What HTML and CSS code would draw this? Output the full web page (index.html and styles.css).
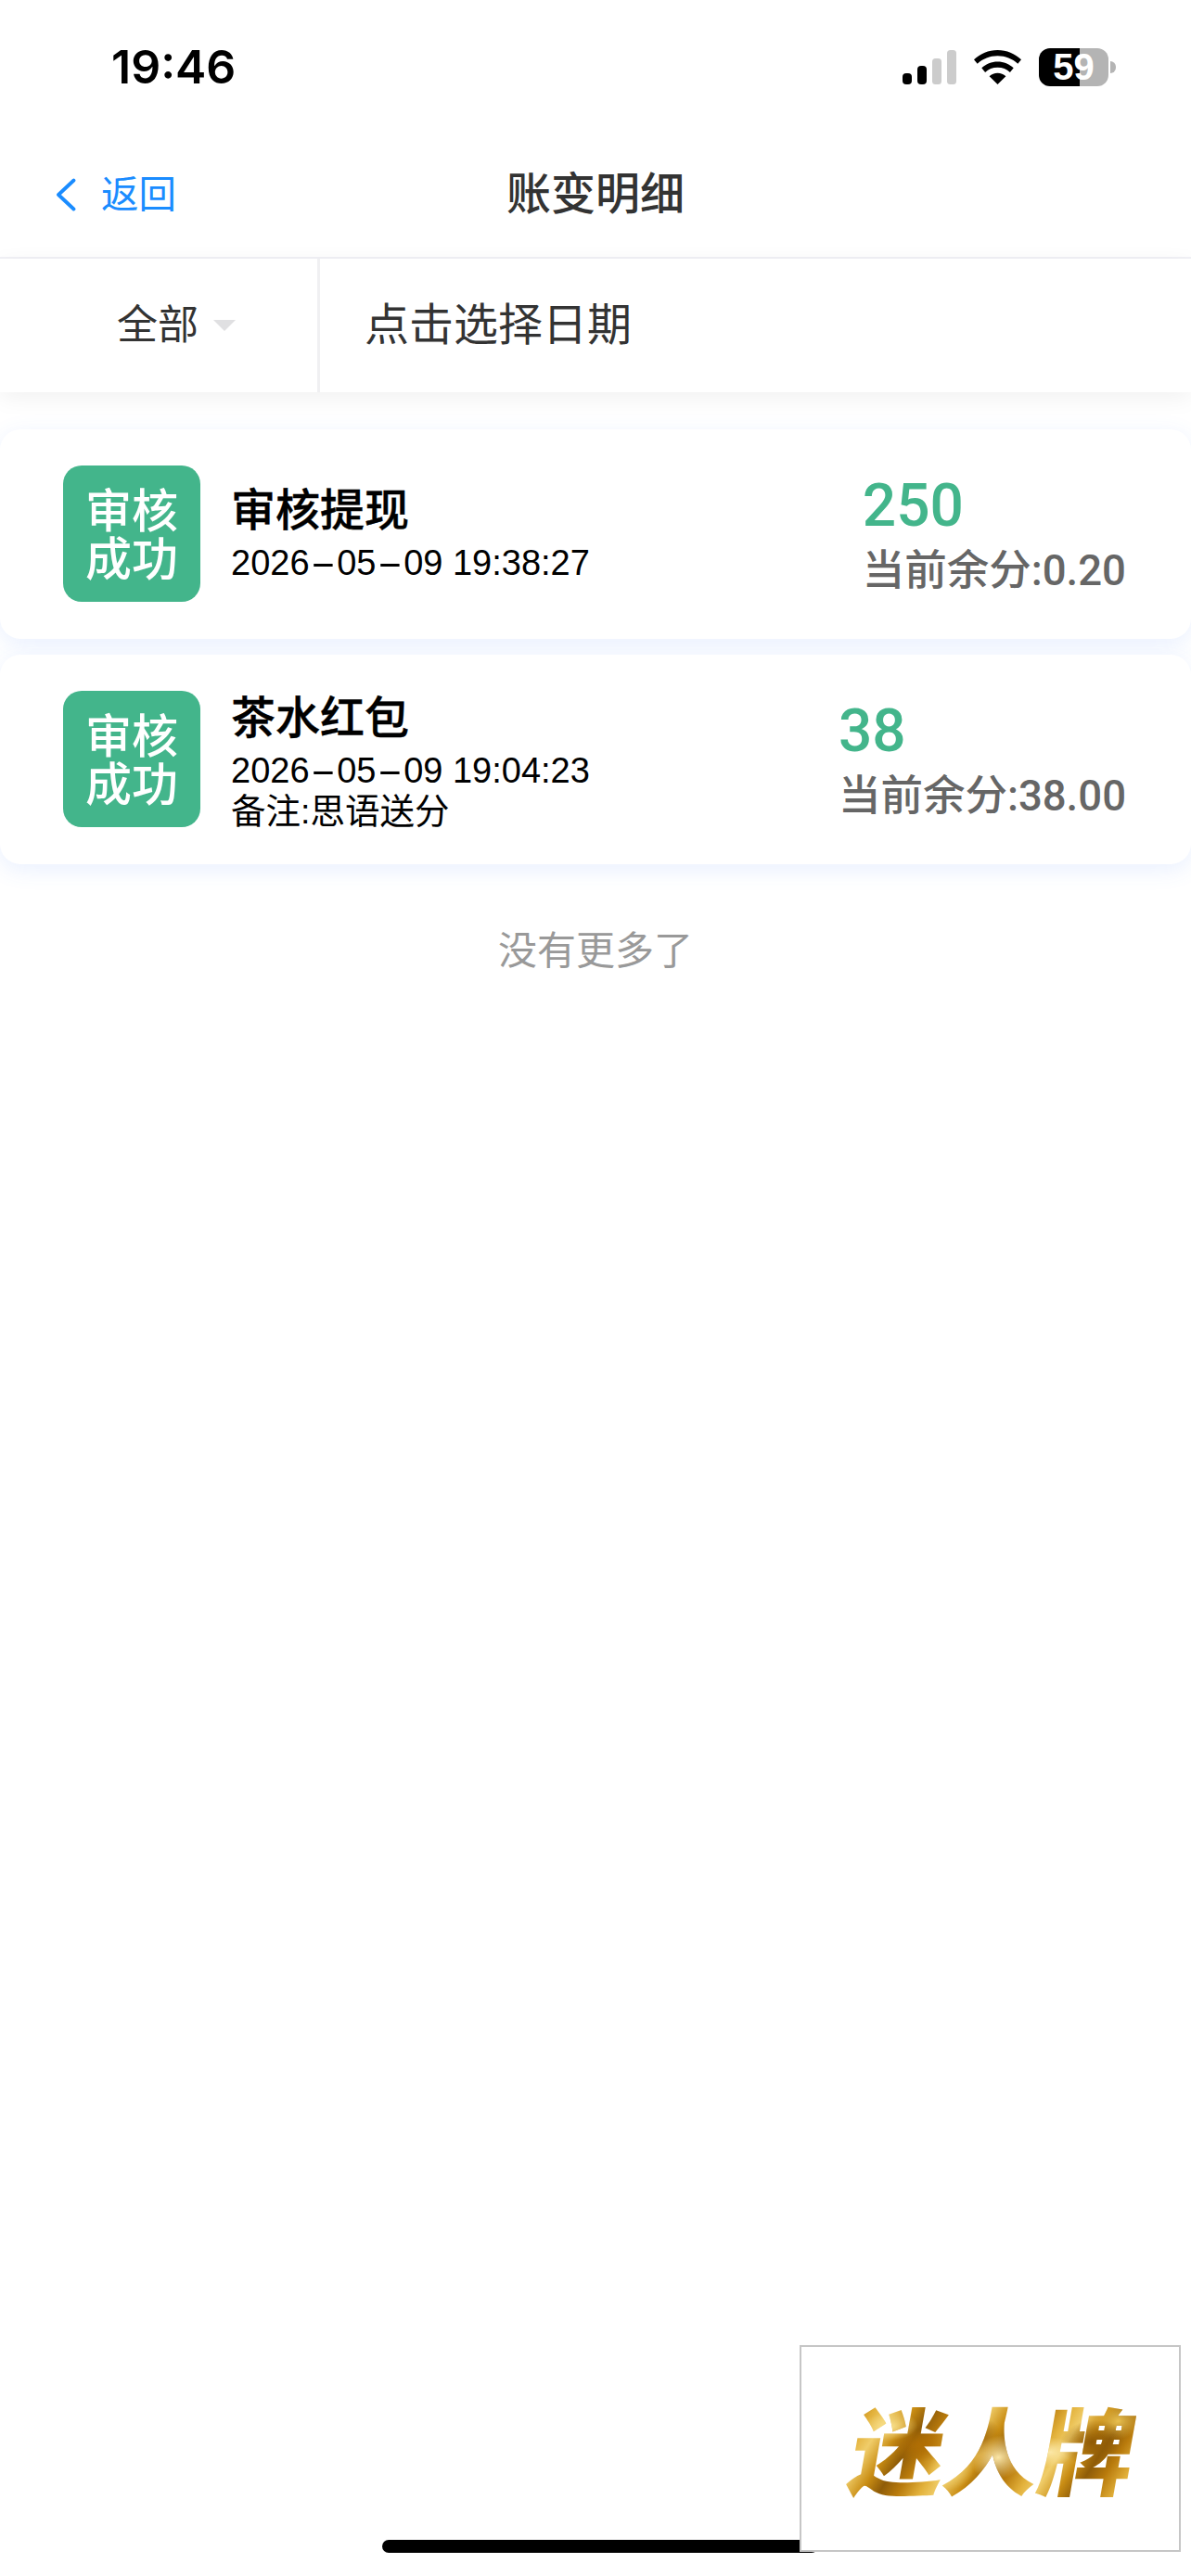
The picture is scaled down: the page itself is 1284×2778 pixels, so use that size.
FILE: index.html
```html
<!DOCTYPE html>
<html lang="zh-CN">
<head>
<meta charset="utf-8">
<title>账变明细</title>
<link rel="stylesheet" href="styles.css">
</head>
<body>
<div class="page">
  <div class="status">
    <span class="time">19:46</span>
    <div class="status-icons">
      <svg class="signal" width="58" height="37" viewBox="0 0 58 37"><rect x="0" y="25" width="10" height="12" rx="4" fill="#000"/><rect x="16" y="17" width="10" height="20" rx="4" fill="#000"/><rect x="32" y="9" width="10" height="28" rx="3.5" fill="#ccc"/><rect x="48" y="0" width="10" height="37" rx="3.5" fill="#ccc"/></svg>
      <svg class="wifi" width="51" height="37" viewBox="0 0 51 37"><path d="M25.5 0C15.6 0 7 3.8 0 10.2l3.7 4.6C9.700 9.300 17.100 6.300 25.500 6.300s15.800 3 21.800 8.500l3.700-4.600C44 3.800 35.400 0 25.500 0z" fill="#000"/><path d="M25.500 12.500c-6.600 0-12.500 2.500-17.200 6.700l3.800 4.700c3.500-3.200 8.100-5.100 13.400-5.100s9.900 1.900 13.400 5.100l3.800-4.700C38 15 32.100 12.500 25.500 12.500z" fill="#000"/><path d="M25.500 24.800c-3.400 0-6.500 1.300-8.900 3.400L25.500 37l8.900-8.800c-2.400-2.100-5.500-3.400-8.900-3.400z" fill="#000"/></svg>
      <div class="battery"><span class="battery-level">59</span><span class="battery-nub"></span></div>
    </div>
  </div>

  <nav class="nav">
    <a class="back">
      <svg class="chevron" width="22" height="36" viewBox="0 0 22 36"><path d="M19.500 2.500L3 18l16.500 15.500" fill="none" stroke="#1a8cff" stroke-width="3.800" stroke-linecap="round" stroke-linejoin="round"/></svg>
      <span>返回</span>
    </a>
    <h1 class="nav-title">账变明细</h1>
  </nav>

  <div class="filter">
    <div class="filter-type"><span>全部</span><i class="caret"></i></div>
    <div class="filter-date">点击选择日期</div>
  </div>

  <main class="list">
    <section class="card">
      <div class="badge">审核<br>成功</div>
      <div class="info">
        <div class="title">审核提现</div>
        <div class="date">2026<span class="dash">-</span>05<span class="dash">-</span>09 19:38:27</div>
      </div>
      <div class="amount">
        <div class="value">250</div>
        <div class="balance">当前余分:0.20</div>
      </div>
    </section>
    <section class="card">
      <div class="badge">审核<br>成功</div>
      <div class="info">
        <div class="title">茶水红包</div>
        <div class="date">2026<span class="dash">-</span>05<span class="dash">-</span>09 19:04:23</div>
        <div class="note">备注:思语送分</div>
      </div>
      <div class="amount">
        <div class="value">38</div>
        <div class="balance">当前余分:38.00</div>
      </div>
    </section>
  </main>
  <p class="nomore">没有更多了</p>

  <div class="home-bar"></div>
  <div class="brand"><span class="brand-text">迷人牌</span></div>
</div>
</body>
</html>
```

FILE: styles.css
```css
* { box-sizing: border-box; }
html, body { margin: 0; padding: 0; background: #fff; }
body { font-family: "Liberation Sans", "Noto Sans CJK SC", sans-serif; }
.page { position: relative; width: 1284px; height: 2778px; overflow: hidden; background: #fff; }

.status { height: 140px; display: flex; justify-content: space-between; align-items: flex-start; padding: 44px 89px 0 120px; }
.time { font-family: "Inter", "Liberation Sans", sans-serif; font-size: 50px; font-weight: 600; line-height: 56px; color: #000; }
.status-icons { display: flex; align-items: center; gap: 19px; margin-top: 8px; }
.signal, .wifi { display: block; }
.battery { position: relative; width: 75px; height: 41px; border-radius: 12px; background: linear-gradient(to right, #000 59%, #b4b4b4 59%); display: flex; align-items: center; justify-content: center; }
.battery-level { font-size: 40px; line-height: 41px; font-weight: 700; color: #fff; }
.battery-nub { position: absolute; right: -8px; top: 14px; width: 6px; height: 13px; border-radius: 0 7px 7px 0; background: #b4b4b4; }

.nav { position: relative; height: 139px; display: flex; align-items: center; justify-content: center; border-bottom: 2px solid #f1f1f6; }
.back { position: absolute; left: 60px; top: 52px; display: flex; align-items: center; gap: 27px; color: #1a8cff; font-size: 40.5px; line-height: 36px; }
.nav-title { margin: 3px 0 0; font-size: 48px; line-height: 60px; font-weight: 500; color: #333; }

.filter { position: relative; z-index: 2; height: 144px; display: flex; background: #fff; box-shadow: 0 6px 24px rgba(0, 0, 0, 0.06); }
.filter-type { width: 345px; display: flex; align-items: center; padding: 0 0 8px 126px; gap: 16px; border-right: 3px solid #f0f0f2; font-size: 44px; color: #333; }
.caret { width: 0; height: 0; margin-top: 8px; border-left: 12px solid transparent; border-right: 12px solid transparent; border-top: 12px solid #e0e0e2; }
.filter-date { display: flex; align-items: center; padding: 0 0 10px 48px; font-size: 48px; color: #333; }

.list { padding-top: 40px; display: flex; flex-direction: column; gap: 17px; }
.card { height: 226px; display: flex; align-items: center; padding: 0 70px 0 68px; background: #fff; border-radius: 22px; box-shadow: 0 6px 24px rgba(70, 130, 255, 0.12); }
.badge { flex: none; width: 148px; height: 147px; margin-bottom: 2px; border-radius: 20px; background: #43b58b; color: #fff; font-size: 50px; line-height: 52px; font-weight: 500; text-align: center; padding-top: 24px; }
.info { flex: 1; padding-left: 33px; }
.title { font-size: 48px; line-height: 62px; font-weight: 500; color: #000; -webkit-text-stroke: 0.4px #000; }
.date { font-size: 38px; line-height: 50px; color: #000; }
.dash { display: inline-block; margin: 0 8.5px; transform: scaleX(2.2); }
.note { font-size: 37.5px; line-height: 38px; color: #000; }
.amount { flex: none; font-family: "Roboto", "Noto Sans CJK SC", sans-serif; }
.value { font-size: 64px; line-height: 78px; padding-top: 2px; font-weight: 500; color: #43b58b; }
.balance { font-size: 45.500px; line-height: 62px; font-weight: 500; color: #666; }

.nomore { margin: 66px 0 0; text-align: center; font-size: 42px; line-height: 56px; color: #999; }

.home-bar { position: absolute; left: 412px; top: 2739px; width: 470px; height: 14px; border-radius: 7px; background: #000; }
.brand { position: absolute; left: 862px; top: 2529px; width: 411px; height: 223px; background: #fff; border: 2px solid #c6c6c6; display: flex; align-items: center; justify-content: center; padding: 0 0 4px 8px; }
.brand-text { display: block; font-family: "Noto Sans CJK SC", sans-serif; font-weight: 900; font-size: 102px; line-height: 112px; transform: skewX(-10deg); background:
  radial-gradient(ellipse 30px 16px at 12% 30%, #f8e08c 0, rgba(248, 224, 140, 0) 100%),
  radial-gradient(ellipse 36px 18px at 24% 48%, #b06e04 0, rgba(176, 110, 4, 0) 100%),
  radial-gradient(ellipse 26px 22px at 36% 72%, #f5d878 0, rgba(245, 216, 120, 0) 100%),
  radial-gradient(ellipse 30px 24px at 52% 60%, #fbe6a6 0, rgba(251, 230, 166, 0) 100%),
  radial-gradient(ellipse 22px 20px at 44% 40%, #9a6206 0, rgba(154, 98, 6, 0) 100%),
  radial-gradient(ellipse 26px 16px at 70% 55%, #fbe8a8 0, rgba(251, 232, 168, 0) 100%),
  radial-gradient(ellipse 34px 24px at 84% 45%, #8f5a06 0, rgba(143, 90, 6, 0) 100%),
  radial-gradient(ellipse 26px 20px at 92% 25%, #e9c050 0, rgba(233, 192, 80, 0) 100%),
  repeating-linear-gradient(115deg, #b87a0c 0, #e3b23c 22px, #f0cd6a 38px, #c98d14 60px, #8f5c08 78px, #b87a0c 96px);
  -webkit-background-clip: text; background-clip: text; color: transparent; }
```
